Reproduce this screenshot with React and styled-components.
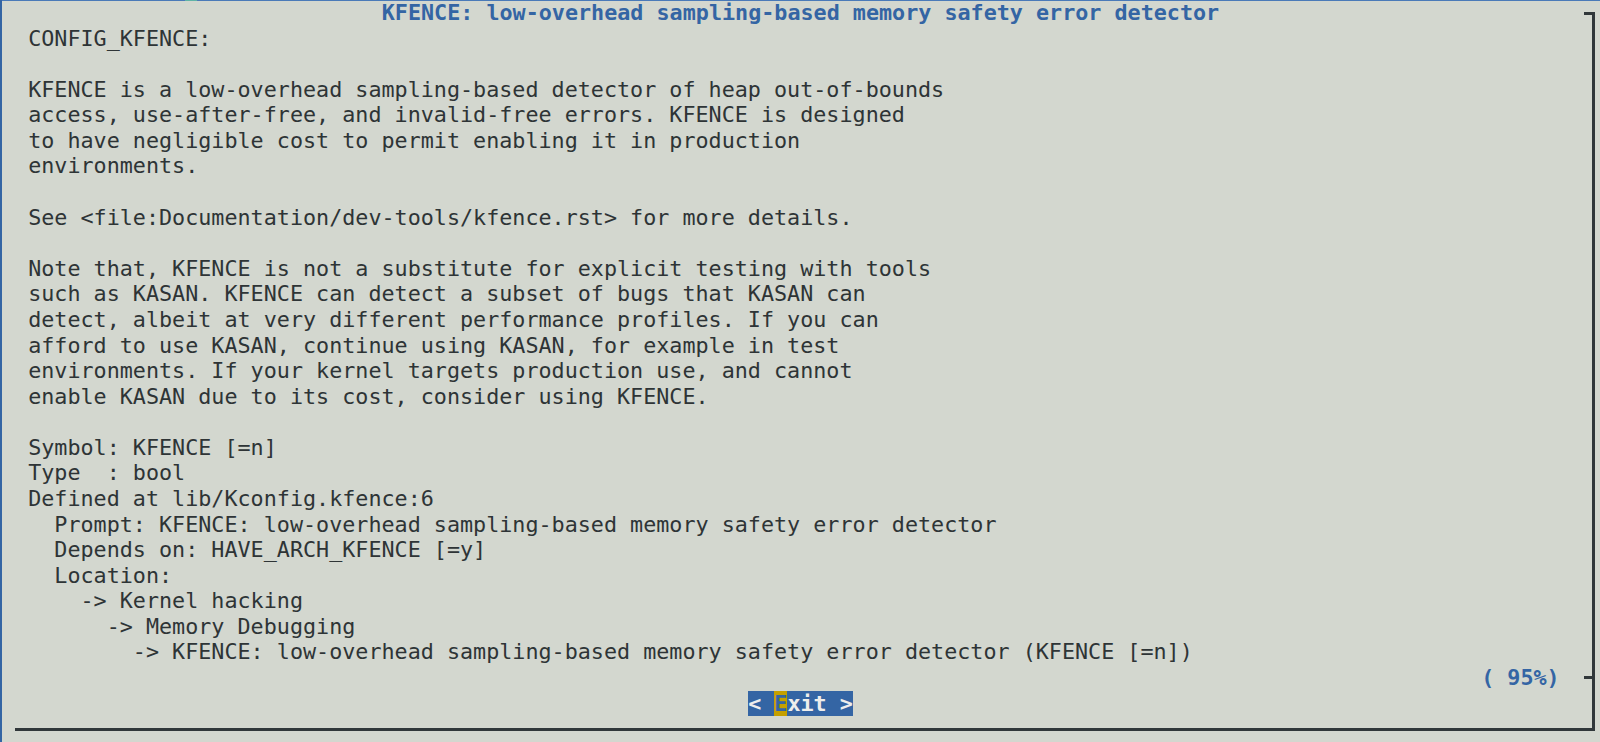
import React from "react";
import styled, { createGlobalStyle } from "styled-components";

// terminal cell metrics (122 x 29 grid)
const CW = 13.09;
const ROW = 742 / 29;

const GlobalStyle = createGlobalStyle`
  html, body {
    margin: 0;
    padding: 0;
    background: #d3d7cf;
  }
  body {
    font-family: "DejaVu Sans Mono", "Liberation Mono", monospace;
  }
`;

const Screen = styled.div`
  position: relative;
  width: 1600px;
  height: 742px;
  box-sizing: border-box;
  overflow: hidden;
  background: #d3d7cf;
  border-left: 2px solid #3465a4;
  box-shadow: inset 0 1px 0 #4a7ab8;
  color: #2e3436;
  font-size: 21.74px;

  /* little teal mark on the window edge */
  &::before {
    content: "";
    position: absolute;
    top: 0;
    left: 183px;
    width: 12px;
    height: 1px;
    background: #5fb3a6;
  }
`;

const Dialog = styled.div`
  position: relative;
  display: flex;
  flex-direction: column;
  width: ${122 * CW}px;
`;

/* box drawing: light top/left edges are invisible, dark right/bottom */
const Frame = styled.div`
  position: absolute;
  left: ${CW}px;
  top: 11.5px;
  width: 1580px;
  height: 719px;
  box-sizing: border-box;
  border-right: 3px solid #30373a;
  border-bottom: 3px solid #30373a;
  pointer-events: none;

  &::before,
  &::after {
    content: "";
    position: absolute;
    right: 0;
    width: 8px;
    height: 3px;
    background: #30373a;
  }
  &::before {
    top: 0;
  }
  &::after {
    top: 664.5px;
  }
`;

const Line = styled.div`
  height: ${ROW}px;
  line-height: ${ROW}px;
  white-space: pre;
  padding-left: ${(p) => (p.$indent ?? 2) * CW}px;
  padding-right: ${(p) => (p.$right ?? 0) * CW}px;
  text-align: ${(p) => p.$align || "left"};
`;

const Title = styled(Line)`
  color: #3465a4;
  font-weight: bold;
`;

const Percent = styled(Line)`
  color: #3465a4;
  font-weight: bold;
`;

const Button = styled.span`
  display: inline-block;
  height: ${ROW}px;
  background: #3465a4;
  color: #eeeeec;
  font-weight: bold;
`;

const Hotkey = styled.span`
  display: inline-block;
  height: ${ROW}px;
  background: #c4a000;
  color: #3465a4;
`;

const body = [
  "CONFIG_KFENCE:",
  "",
  "KFENCE is a low-overhead sampling-based detector of heap out-of-bounds",
  "access, use-after-free, and invalid-free errors. KFENCE is designed",
  "to have negligible cost to permit enabling it in production",
  "environments.",
  "",
  "See <file:Documentation/dev-tools/kfence.rst> for more details.",
  "",
  "Note that, KFENCE is not a substitute for explicit testing with tools",
  "such as KASAN. KFENCE can detect a subset of bugs that KASAN can",
  "detect, albeit at very different performance profiles. If you can",
  "afford to use KASAN, continue using KASAN, for example in test",
  "environments. If your kernel targets production use, and cannot",
  "enable KASAN due to its cost, consider using KFENCE.",
  "",
  "Symbol: KFENCE [=n]",
  "Type  : bool",
  "Defined at lib/Kconfig.kfence:6",
  "  Prompt: KFENCE: low-overhead sampling-based memory safety error detector",
  "  Depends on: HAVE_ARCH_KFENCE [=y]",
  "  Location:",
  "    -> Kernel hacking",
  "      -> Memory Debugging",
  "        -> KFENCE: low-overhead sampling-based memory safety error detector (KFENCE [=n])",
];

export default function App() {
  return (
    <>
      <GlobalStyle />
      <Screen>
        <Dialog>
          <Title $indent={0} $align="center">
            KFENCE: low-overhead sampling-based memory safety error detector
          </Title>
          {body.map((text, i) => (
            <Line key={i}>{text}</Line>
          ))}
          <Percent $indent={0} $right={3} $align="right">
            ( 95%)
          </Percent>
          <Line $indent={0} $align="center">
            <Button>
              {"< "}
              <Hotkey>E</Hotkey>
              {"xit >"}
            </Button>
          </Line>
          <Line />
          <Frame />
        </Dialog>
      </Screen>
    </>
  );
}
